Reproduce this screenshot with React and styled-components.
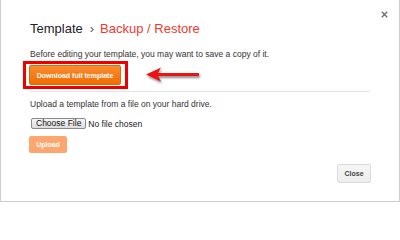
import styled, { createGlobalStyle } from "styled-components";

const GlobalStyle = createGlobalStyle`
    body {
        margin: 0;
        background: #fff;
        font-family: "Liberation Sans", Arial, sans-serif;
    }
`;

const Dialog = styled.div`
    position: relative;
    box-sizing: border-box;
    width: 400px;
    height: 202px;
    padding: 21px 28px 0 29px;
    border: 1px solid #cfcfcf;
    border-top: none;
    background: #fff;
    color: #333;
`;

const CloseX = styled.button`
    position: absolute;
    top: 11px;
    right: 11px;
    width: 7px;
    height: 7px;
    padding: 0;
    border: none;
    background: none;
    display: flex;
    cursor: pointer;
`;

const Title = styled.h1`
    margin: 0;
    font-size: 13px;
    line-height: 15px;
    font-weight: normal;
    color: #222;
    display: flex;
    align-items: baseline;
`;

const Sep = styled.span`
    margin: 0 6px 0 7px;
    color: #555;
`;

const Crumb = styled.span`
    color: #ee3a2c;
`;

const Text = styled.p`
    margin: ${p => p.$top || 0}px 0 0;
    font-size: 8.5px;
    line-height: 11px;
    color: #333;
`;

const Annotated = styled.div`
    display: flex;
    align-items: center;
    margin: 1px 0 0 -7px;
`;

const Highlight = styled.div`
    border: 3px solid #ee0000;
    padding: 1px 4px 1px 3px;
    display: flex;
`;

const Arrow = styled.svg`
    margin-left: 18px;
    filter: drop-shadow(1px 2px 1px rgba(0, 0, 0, 0.45));
`;

const OrangeButton = styled.button`
    box-sizing: border-box;
    width: ${p => p.$w}px;
    height: ${p => p.$h}px;
    padding: 0;
    border: 1px solid ${p => (p.disabled ? "#ffa56f" : "#e56700")};
    border-radius: 2px;
    background: ${p => (p.disabled ? "#ffa66f" : "linear-gradient(#fb8c30, #f26c00)")};
    color: #fff;
    font-family: inherit;
    font-size: 7px;
    font-weight: bold;
    white-space: nowrap;
    cursor: ${p => (p.disabled ? "default" : "pointer")};
`;

const Divider = styled.hr`
    margin: 2px 1px 0 0;
    border: none;
    border-top: 1px solid #e5e5e5;
`;

const FileRow = styled.div`
    display: flex;
    align-items: center;
    margin-top: 8px;
    margin-left: 1px;
    font-size: 8.5px;
`;

const ChooseButton = styled.button`
    box-sizing: border-box;
    height: 11px;
    padding: 0 4px;
    border: 1px solid #8a8a8a;
    border-radius: 2px;
    background: linear-gradient(#f7f7f7, #dcdcdc);
    font-family: inherit;
    font-size: 8.5px;
    line-height: 9px;
    color: #111;
`;

const FileName = styled.span`
    margin-left: 2px;
    color: #222;
`;

const UploadRow = styled.div`
    display: flex;
    margin-top: 7px;
    margin-left: -1px;
`;

const Footer = styled.div`
    display: flex;
    justify-content: flex-end;
    margin-top: 11px;
`;

const GreyButton = styled.button`
    box-sizing: border-box;
    width: 34px;
    height: 19px;
    padding: 0;
    border: 1px solid #dcdcdc;
    border-radius: 2px;
    background: linear-gradient(#f6f6f6, #eeeeee);
    font-family: inherit;
    font-size: 7px;
    font-weight: bold;
    color: #444;
`;

const App = () => {
    return (
        <>
            <GlobalStyle />
            <Dialog>
                <CloseX aria-label="Close">
                    <svg width="7" height="7" viewBox="0 0 7 7">
                        <path d="M0.8 0.8 L6.2 6.2 M6.2 0.8 L0.8 6.2" stroke="#707070" strokeWidth="1.4" />
                    </svg>
                </CloseX>
                <Title>
                    Template<Sep>›</Sep><Crumb>Backup / Restore</Crumb>
                </Title>
                <Text $top={13}>Before editing your template, you may want to save a copy of it.</Text>
                <Annotated>
                    <Highlight>
                        <OrangeButton $w={92} $h={20}>Download full template</OrangeButton>
                    </Highlight>
                    <Arrow width="55" height="20" viewBox="0 0 55 20">
                        <path d="M0 9.5 L15 2.5 L12 8 L53 8 L53 11 L12 11 L15 16.5 Z" fill="#ee1212" />
                    </Arrow>
                </Annotated>
                <Divider />
                <Text $top={7}>Upload a template from a file on your hard drive.</Text>
                <FileRow>
                    <ChooseButton>Choose File</ChooseButton>
                    <FileName>No file chosen</FileName>
                </FileRow>
                <UploadRow>
                    <OrangeButton disabled $w={38} $h={17}>Upload</OrangeButton>
                </UploadRow>
                <Footer>
                    <GreyButton>Close</GreyButton>
                </Footer>
            </Dialog>
        </>
    );
};

export default App;
